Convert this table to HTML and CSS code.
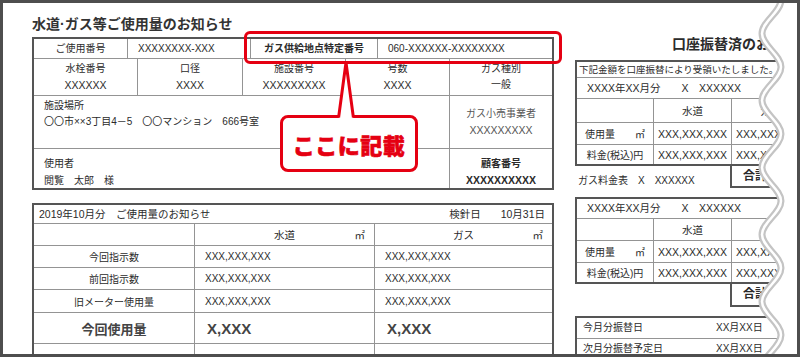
FILE: index.html
```html
<!DOCTYPE html>
<html lang="ja">
<head>
<meta charset="utf-8">
<title>水道・ガス等ご使用量のお知らせ</title>
<link rel="stylesheet" href="styles.css">
</head>
<body>
<div class="frame">
  <section class="left">
    <h1 class="title">水道·ガス等ご使用量のお知らせ</h1>
    <div class="tbl info">
      <div class="row r1">
        <div class="c ctr">ご使用番号</div>
        <div class="c pad">XXXXXXXX-XXX</div>
        <div class="c ctr bold">ガス供給地点特定番号</div>
        <div class="c pad">060-XXXXXX-XXXXXXXX</div>
      </div>
      <div class="row r2">
        <div class="c stack"><span>水栓番号</span><span class="v">XXXXXX</span></div>
        <div class="c stack"><span>口径</span><span class="v">XXXX</span></div>
        <div class="c stack"><span>施設番号</span><span class="v">XXXXXXXXX</span></div>
        <div class="c stack"><span>号数</span><span class="v">XXXX</span></div>
        <div class="c stack"><span>ガス種別</span><span>一般</span></div>
      </div>
      <div class="row r3">
        <div class="c addr"><span>施設場所</span><span>〇〇市××3丁目4－5　〇〇マンション　666号室</span></div>
        <div class="c stack muted"><span>ガス小売事業者</span><span class="v">XXXXXXXXX</span></div>
      </div>
      <div class="row r4">
        <div class="c addr"><span>使用者</span><span>閲覧　太郎　様</span></div>
        <div class="c stack bold"><span>顧客番号</span><span class="v">XXXXXXXXXX</span></div>
      </div>
    </div>

    <div class="tbl usage">
      <div class="row u-head">
        <span>2019年10月分　ご使用量のお知らせ</span>
        <span class="date"><span>検針日</span><span>10月31日</span></span>
      </div>
      <div class="row u-row u-cols">
        <div class="c"></div>
        <div class="c unit"><span></span><span>水道</span><span class="m2">㎡</span></div>
        <div class="c unit"><span></span><span>ガス</span><span class="m2">㎡</span></div>
      </div>
      <div class="row u-row u-r1">
        <div class="c ctr">今回指示数</div>
        <div class="c val">XXX,XXX,XXX</div>
        <div class="c val">XXX,XXX,XXX</div>
      </div>
      <div class="row u-row u-r2">
        <div class="c ctr">前回指示数</div>
        <div class="c val">XXX,XXX,XXX</div>
        <div class="c val">XXX,XXX,XXX</div>
      </div>
      <div class="row u-row u-r3">
        <div class="c ctr">旧メーター使用量</div>
        <div class="c val">XXX,XXX,XXX</div>
        <div class="c val">XXX,XXX,XXX</div>
      </div>
      <div class="row u-row u-big">
        <div class="c ctr">今回使用量</div>
        <div class="c val">X,XXX</div>
        <div class="c val">X,XXX</div>
      </div>
      <div class="row u-row u-last">
        <div class="c"></div>
        <div class="c"></div>
        <div class="c"></div>
      </div>
    </div>
  </section>

  <section class="right">
    <h2 class="rtitle">口座振替済のお知らせ</h2>
    <div class="tbl pay">
      <div class="row p-note">下記金額を口座振替により受領いたしました。</div>
      <div class="row p-month">XXXX年XX月分　　X　XXXXXX</div>
      <div class="row p-grid p-h">
        <div class="c"></div><div class="c">水道</div><div class="c">ガス</div><div class="c">合計</div>
      </div>
      <div class="row p-grid p-a">
        <div class="c">使用量　　㎡</div><div class="c">XXX,XXX,XXX</div><div class="c">XXX,XXX,XXX</div><div class="c"></div>
      </div>
      <div class="row p-grid p-b">
        <div class="c">料金(税込)円</div><div class="c">XXX,XXX,XXX</div><div class="c">XXX,XXX,XXX</div><div class="c"></div>
      </div>
    </div>
    <div class="sum-line">
      <span class="sum-note">ガス料金表　X　XXXXXX</span>
      <div class="sum-box">合計　XXX,XXX</div>
    </div>
    <div class="tbl pay pay2">
      <div class="row p-month">XXXX年XX月分　　X　XXXXXX</div>
      <div class="row p-grid p-h">
        <div class="c"></div><div class="c">水道</div><div class="c">ガス</div><div class="c">合計</div>
      </div>
      <div class="row p-grid p-a">
        <div class="c">使用量　　㎡</div><div class="c">XXX,XXX,XXX</div><div class="c">XXX,XXX,XXX</div><div class="c"></div>
      </div>
      <div class="row p-grid p-b">
        <div class="c">料金(税込)円</div><div class="c">XXX,XXX,XXX</div><div class="c">XXX,XXX,XXX</div><div class="c"></div>
      </div>
    </div>
    <div class="sum-line short">
      <span class="sum-note"></span>
      <div class="sum-box">合計　XXX,XXX</div>
    </div>
    <div class="tbl dates">
      <div class="row d-row"><span>今月分振替日</span><span>XX月XX日</span></div>
      <div class="row d-row"><span>次月分振替予定日</span><span>XX月XX日</span></div>
    </div>
  </section>

  <div class="mark"></div>
  <div class="bubble">ここに記載</div>
  <svg class="pointer" viewBox="330 58 32 67" width="32" height="67" aria-hidden="true">
    <polygon points="338.6,119.5 346,62.5 353.4,119.5" fill="#fff"/>
    <polyline points="338.6,117.5 346,62.5 353.4,117.5" fill="none" stroke="#e50012" stroke-width="3" stroke-linejoin="round"/>
  </svg>
  <svg class="tear" viewBox="740 3 57 351" width="57" height="351" aria-hidden="true">
    <path fill="#fff" d="M762,-33.5 C762,-21.5 781,-12 781,0 S762,21.5 762,33.5 S781,55 781,67 S762,88.5 762,100.5 S781,122 781,134 S762,155.5 762,167.5 S781,189 781,201 S762,222.5 762,234.5 S781,256 781,268 S762,289.5 762,301.5 S781,323 781,335 S762,356.5 762,368.5 L800,368.5 L800,-33.5 Z"/>
    <path fill="none" stroke="#c4c4c4" stroke-width="7" d="M762,-33.5 C762,-21.5 781,-12 781,0 S762,21.5 762,33.5 S781,55 781,67 S762,88.5 762,100.5 S781,122 781,134 S762,155.5 762,167.5 S781,189 781,201 S762,222.5 762,234.5 S781,256 781,268 S762,289.5 762,301.5 S781,323 781,335 S762,356.5 762,368.5"/>
    <path fill="none" stroke="#fff" stroke-width="2.5" d="M762,-33.5 C762,-21.5 781,-12 781,0 S762,21.5 762,33.5 S781,55 781,67 S762,88.5 762,100.5 S781,122 781,134 S762,155.5 762,167.5 S781,189 781,201 S762,222.5 762,234.5 S781,256 781,268 S762,289.5 762,301.5 S781,323 781,335 S762,356.5 762,368.5"/>
  </svg>
</div>
</body>
</html>
```

FILE: styles.css
```css
html, body {
  margin: 0;
  padding: 0;
  background: #fff;
}

.frame {
  width: 800px;
  height: 357px;
  box-sizing: border-box;
  border: 3px solid #4e4e4e;
  position: relative;
  overflow: hidden;
  display: flex;
  align-items: flex-start;
  padding-left: 29px;
  background: #fff;
  font-family: "Liberation Sans", "Noto Sans CJK JP", sans-serif;
  font-size: 10px;
  color: #2b2b2b;
}

/* ---------- left column ---------- */
.left {
  width: 522px;
  flex: none;
}

.title {
  margin: 0;
  height: 34px;
  padding-top: 10px;
  box-sizing: border-box;
  font-size: 14px;
  line-height: 22px;
  font-weight: 700;
  color: #333;
}

.tbl {
  border: 2px solid #555;
  box-sizing: border-box;
}

.row {
  display: grid;
  box-sizing: border-box;
  border-top: 1px solid #949494;
}

.row:first-child {
  border-top: 0;
}

.c {
  box-sizing: border-box;
  border-left: 1px solid #949494;
  min-width: 0;
  overflow: hidden;
  white-space: nowrap;
}

.c:first-child {
  border-left: 0;
}

.ctr { text-align: center; }
.pad { padding-left: 10px; }
.bold { font-weight: 700; }
.muted { color: #555; }
.v { font-size: 10.5px; }

.r1 {
  grid-template-columns: 93px 123px 127px 1fr;
  height: 19px;
  line-height: 19px;
}

.r2 {
  grid-template-columns: 103px 105px 103px 104px 1fr;
  height: 37px;
}

.r3 {
  grid-template-columns: 415px 1fr;
  height: 53px;
}

.r4 {
  grid-template-columns: 415px 1fr;
  height: 40px;
}

.stack {
  display: flex;
  flex-direction: column;
  justify-content: center;
  align-items: center;
  line-height: 16px;
}

.addr {
  display: flex;
  flex-direction: column;
  padding: 2px 0 0 10px;
  line-height: 16px;
}

.r4 .addr,
.r4 .stack {
  justify-content: flex-start;
  padding-top: 6px;
  line-height: 17px;
}

/* usage table */
.usage {
  margin-top: 13px;
}

.u-head {
  display: flex;
  justify-content: space-between;
  height: 18px;
  line-height: 18px;
  padding: 0 7px 0 5px;
  font-size: 10.5px;
}

.date {
  display: flex;
  gap: 20px;
}

.u-row {
  grid-template-columns: 160px 180px 1fr;
}

.u-row .c {
  display: flex;
  align-items: center;
}

.u-row .ctr {
  justify-content: center;
}

.u-row .unit {
  display: grid;
  grid-template-columns: 1fr auto 1fr;
  padding: 0 9px 0 9px;
  font-size: 10.5px;
}

.m2 {
  justify-self: end;
}

.val {
  padding-left: 10px;
}

.u-cols { height: 22px; }
.u-r1 { height: 22px; }
.u-r2 { height: 22px; }
.u-r3 { height: 23px; }
.u-big { height: 31px; }
.u-last { height: 30px; }

.u-big .ctr {
  font-size: 13px;
  font-weight: 700;
  color: #444;
}

.u-big .val {
  font-size: 15px;
  font-weight: 700;
  color: #444;
  padding-left: 12px;
}

/* ---------- right column ---------- */
.right {
  width: 330px;
  flex: none;
  margin-left: 21px;
}

.rtitle {
  margin: 0;
  height: 57px;
  padding: 30px 0 0 97px;
  box-sizing: border-box;
  font-size: 14px;
  line-height: 22px;
  font-weight: 700;
  white-space: nowrap;
}

.p-note {
  display: block;
  height: 15px;
  line-height: 15px;
  padding-left: 2px;
  font-size: 9.5px;
  white-space: nowrap;
}

.p-month {
  display: block;
  height: 21px;
  line-height: 20px;
  padding-left: 10px;
  font-size: 10.5px;
  white-space: nowrap;
}

.pay2 .p-month {
  height: 19px;
  line-height: 19px;
}

.p-grid {
  grid-template-columns: 76px 78px 78px 1fr;
}

.p-grid .c {
  display: flex;
  align-items: center;
  justify-content: center;
  font-size: 10.5px;
}

.p-grid .c:first-child {
  font-size: 10px;
}

.p-h { height: 24px; }
.pay2 .p-h { height: 22px; }
.p-a { height: 22px; }
.p-b { height: 20px; }

.sum-line {
  display: flex;
  height: 31px;
}

.sum-line.short {
  height: 32px;
}

.sum-note {
  width: 155px;
  flex: none;
  box-sizing: border-box;
  padding-left: 3px;
  line-height: 30px;
  white-space: nowrap;
}

.sum-box {
  flex: 1;
  height: 22px;
  box-sizing: border-box;
  border-left: 2px solid #555;
  border-bottom: 2px solid #555;
  padding-left: 11px;
  font-size: 12px;
  font-weight: 700;
  line-height: 20px;
  white-space: nowrap;
}

.short .sum-box {
  height: 23px;
  line-height: 21px;
}

.d-row {
  grid-template-columns: 133px 1fr;
  height: 21px;
  line-height: 20px;
}

.d-row:first-child {
  height: 20px;
}

.d-row span {
  padding-left: 6px;
}

/* ---------- overlays ---------- */
.mark {
  position: absolute;
  left: 241px;
  top: 28px;
  width: 318px;
  height: 33px;
  box-sizing: border-box;
  border: 3px solid #e50012;
  border-radius: 6px;
}

.bubble {
  position: absolute;
  left: 277px;
  top: 112px;
  width: 138px;
  height: 57px;
  box-sizing: border-box;
  border: 3px solid #e50012;
  border-radius: 8px;
  background: #fff;
  color: #e50012;
  font-family: "Noto Sans CJK JP", sans-serif;
  font-size: 22px;
  font-weight: 900;
  -webkit-text-stroke: 0.6px #e50012;
  letter-spacing: 0.5px;
  display: flex;
  align-items: center;
  justify-content: center;
}

.pointer {
  position: absolute;
  left: 327px;
  top: 55px;
  overflow: visible;
}

.tear {
  position: absolute;
  left: 737px;
  top: 0;
}
```
